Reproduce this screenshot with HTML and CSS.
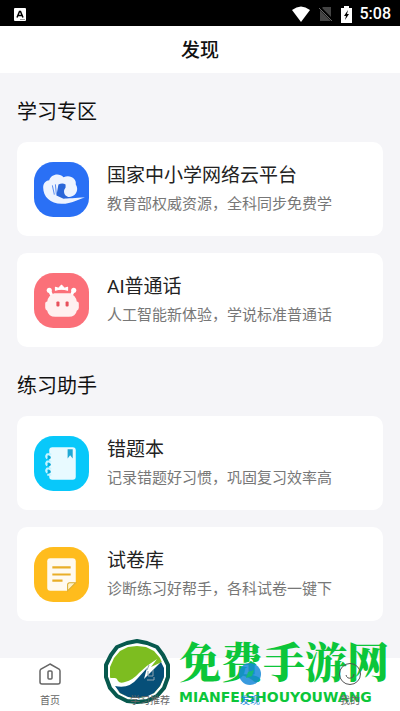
FILE: index.html
```html
<!DOCTYPE html>
<html lang="zh-CN">
<head>
  <meta charset="UTF-8">
  <meta name="viewport" content="width=device-width, initial-scale=1.0">
  <title>发现</title>
  <link rel="stylesheet" href="styles.css">
</head>

<body>
  <div class="status-bar">
    <svg class="status-app" width="12" height="13" viewBox="0 0 12 13">
      <rect width="12" height="13" rx="1" fill="#fff"/>
      <path d="M3 9.5 L5.5 3.5 H6.5 L9 9.5 M4 7.5 H8" fill="none" stroke="#000" stroke-width="1.5"/>
      <path d="M6 11.5 H11" stroke="#999"/>
    </svg>
    <div class="status-icons">
      <svg width="20" height="17" viewBox="0 0 20 17">
        <path d="M1 4 Q10 -3 19 4 L10 16 Z" fill="#fff"/>
      </svg>
      <svg width="14" height="16" viewBox="0 0 14 16">
        <path d="M4 1 H12 V15 H1 V4 Z" fill="#444"/>
        <path d="M0 1 L14 15" stroke="#000" stroke-width="3"/>
        <path d="M0 2 L13 15" stroke="#666" stroke-width="1"/>
      </svg>
      <svg width="11" height="17" viewBox="0 0 11 17">
        <path d="M3 0 H8 V2 H11 V17 H0 V2 H3 Z" fill="#fff"/>
        <path d="M7 4 L3 10 H5 L4 14 L8 8 H6 Z" fill="#000"/>
      </svg>
      <span class="time">5:08</span>
    </div>
  </div>

  <header class="header">
    <h1>发现</h1>
  </header>

  <main class="content">
    <section>
      <h2>学习专区</h2>
      <a href="#" class="card">
        <svg class="card-icon" viewBox="0 0 54 54">
          <rect width="54" height="54" rx="19" fill="#2a70f5"/>
          <path d="M9 25 C9 21 12 18 15 18 C16 12 25 10 29 15 C36 12 42 17 41 22 C44 26 42 33 36 34 L30 35 C36 37 42 34 50 35 C43 36 38 41 27 41 C16 41 9 34 9 25 Z" fill="#eef4ff"/>
          <path d="M24 22 Q28 20 31 22 L31 25 Q28 29 31 33 Q33 35 37 35 L29 36 L22 33 Z" fill="#2a66d8"/>
          <path d="M18 23 L20 32 M21 22 L22 32" stroke="#5c8ef0" stroke-width="1"/>
        </svg>
        <div class="card-text">
          <h3>国家中小学网络云平台</h3>
          <p>教育部权威资源，全科同步免费学</p>
        </div>
      </a>
      <a href="#" class="card">
        <svg class="card-icon" viewBox="0 0 54 54">
          <rect width="54" height="54" rx="19" fill="#fb7079"/>
          <path d="M21 17 V14 L24 15 L27 12 L30 15 L33 14 V17 Q27 15 21 17 Z" fill="#fff" stroke="#fff" stroke-linejoin="round"/>
          <path d="M15 17 L18 23 M39 17 L36 23" stroke="#fff" stroke-width="3"/>
          <circle cx="15" cy="17" r="2.5" fill="#fff"/>
          <circle cx="39" cy="17" r="2.5" fill="#fff"/>
          <path d="M20 20 H35 Q41 22 42 28 Q44 28 44 30 V34 Q44 36 42 37 Q41 43 34 43 H21 Q14 43 13 37 Q11 36 11 34 V30 Q11 28 13 28 Q14 22 20 20 Z" fill="#fff0f0"/>
          <rect x="22" y="28" width="3" height="5" rx="1" fill="#e8505c"/>
          <rect x="31" y="28" width="3" height="5" rx="1" fill="#e8505c"/>
        </svg>
        <div class="card-text">
          <h3>AI普通话</h3>
          <p>人工智能新体验，学说标准普通话</p>
        </div>
      </a>
    </section>

    <section>
      <h2>练习助手</h2>
      <a href="#" class="card">
        <svg class="card-icon" viewBox="0 0 54 54">
          <rect width="54" height="54" rx="19" fill="#08c8fa"/>
          <rect x="15" y="11" width="26" height="32" rx="3" fill="#e8faff"/>
          <path d="M17 18 H13 Q11 20 13 22 M17 25 H13 Q11 27 13 29 M17 32 H13 Q11 34 13 36 M17 38 H13" fill="none" stroke="#c8f4ff" stroke-width="2"/>
          <g fill="#08a8d8">
            <circle cx="15" cy="21" r="1.5"/>
            <circle cx="15" cy="28" r="1.5"/>
            <circle cx="15" cy="35" r="1.5"/>
          </g>
          <path d="M33 13 H38 V22 L35.5 19 L33 22 Z" fill="#20a8d4"/>
        </svg>
        <div class="card-text">
          <h3>错题本</h3>
          <p>记录错题好习惯，巩固复习效率高</p>
        </div>
      </a>
      <a href="#" class="card">
        <svg class="card-icon" viewBox="0 0 54 54">
          <rect width="54" height="54" rx="19" fill="#ffbc1d"/>
          <path d="M16 11 H38 Q41 11 41 14 V35 L33 43 H16 Q13 43 13 40 V14 Q13 11 16 11 Z" fill="#fffaf0"/>
          <path d="M18 20 H36 M18 27 H36 M18 33 H28" stroke="#e9ae28" stroke-width="2"/>
          <path d="M33 43 V37 Q33 35 35 35 H41 Z" fill="#fff3c8" stroke="#d9ac30" stroke-width="1"/>
        </svg>
        <div class="card-text">
          <h3>试卷库</h3>
          <p>诊断练习好帮手，各科试卷一键下</p>
        </div>
      </a>
    </section>
  </main>

  <footer class="footer">
    <div class="watermark">
      <svg class="watermark-logo" width="68" height="66" viewBox="0 0 68 66">
        <path d="M34 2 L44 4 L54 8 L60 16 L65 26 L65 38 L61 49 L54 57 L44 62 L34 63 L24 62 L14 57 L7 49 L3 38 L3 26 L8 16 L14 8 L24 4 Z" fill="#fff" stroke="#07594e" stroke-width="4" stroke-linejoin="round"/>
        <path d="M34 7 L43 8 L51 12 L57 19 L61 28 L61 38 L57 47 L51 54 L43 58 L34 59 L25 58 L17 54 L11 47 L7 38 L7 28 L11 19 L17 12 L25 8 Z" fill="#7dbd20"/>
        <path d="M7 39 L12 39 Q14 39 15 42 Q17 45 22 43 Q30 41 36 34 Q44 26 54 20 L48 28 L61 22 L61 38 L48 57 L24 58 L11 49 Z" fill="#fff"/>
        <path d="M12 47 Q26 50 34 40 L44 29 L41 40 L58 23 L61 29 L61 38 L57 47 L51 54 L43 58 L34 59 L25 58 L17 54 Z" fill="#064f78"/>
      </svg>
      <div class="watermark-text">
        <strong>免费手游网</strong>
        <span>MIANFEISHOUYOUWANG</span>
      </div>
    </div>
    <nav class="tab-bar">
      <a href="#" class="tab">
        <svg width="24" height="24" viewBox="0 0 24 24" fill="none" stroke="#666" stroke-width="1.5">
          <path d="M12 2 L21 7 Q22 8 22 9 V20 Q22 22 20 22 H4 Q2 22 2 20 V9 Q2 8 3 7 Z"/>
          <rect x="10" y="9" width="4" height="8" rx="1"/>
        </svg>
        <span>首页</span>
      </a>
      <a href="#" class="tab">
        <svg width="24" height="24" viewBox="0 0 24 24" fill="none" stroke="#8fa3ae" stroke-width="1">
          <path d="M9 8 L11 3 M10 9 V14 H15 V8 M9 18 H16 V15"/>
        </svg>
        <span>学习推荐</span>
      </a>
      <a href="#" class="tab active">
        <svg width="24" height="24" viewBox="0 0 24 24">
          <circle cx="12" cy="12" r="11" fill="#1688d8" opacity="0.85"/>
          <path d="M8 16 L10 10 L16 8 L14 14 Z" fill="#16b878"/>
        </svg>
        <span>发现</span>
      </a>
      <a href="#" class="tab">
        <svg width="24" height="24" viewBox="0 0 24 24" fill="none" stroke="#555" stroke-width="1">
          <circle cx="12" cy="12" r="10.5"/>
          <path d="M8 13 Q9 17 13 16 Q16 15 16 12"/>
        </svg>
        <span>我的</span>
      </a>
    </nav>
  </footer>
</body>
</html>
```
FILE: styles.css
```css
* {
  box-sizing: border-box;
}

body {
  display: flex;
  flex-direction: column;
  min-height: 100vh;
  margin: 0;
  background-color: #f5f5f8;
  color: #111;
  font-family: Roboto, "Noto Sans CJK SC", sans-serif;
}

h1,
h2,
h3,
p {
  margin: 0;
  font-weight: 400;
}

a {
  color: inherit;
  text-decoration: none;
}

.status-bar {
  display: flex;
  justify-content: space-between;
  align-items: center;
  height: 26px;
  padding: 2px 9px 0 14px;
  background-color: #000;
  color: #fff;
}

.status-icons {
  display: flex;
  align-items: center;
  gap: 8px;
}

.time {
  font-size: 16px;
  font-weight: 500;
  line-height: 24px;
}

.header {
  padding: 9px 0 7px;
  background-color: #fff;
  text-align: center;
}

.header h1 {
  font-size: 19px;
  font-weight: 500;
  line-height: 31px;
}

.content {
  flex: 1;
  padding: 0 17px 17px;
}

.content h2 {
  padding: 25px 0 15px;
  font-size: 20px;
  line-height: 29px;
}

.card {
  display: flex;
  align-items: center;
  gap: 18px;
  height: 94px;
  margin-bottom: 17px;
  padding: 0 17px;
  border-radius: 10px;
  background-color: #fff;
}

.card:last-child {
  margin-bottom: 0;
}

.card-icon {
  flex: none;
  width: 55px;
  height: 55px;
}

.card h3 {
  color: #222;
  font-size: 19px;
  line-height: 31px;
}

.card p {
  color: #777;
  font-size: 15px;
  line-height: 27px;
}

.footer {
  position: relative;
  background-color: #fff;
}

.tab-bar {
  position: relative;
  display: flex;
  padding: 4px 0 2px;
}

.tab {
  display: flex;
  flex: 1;
  flex-direction: column;
  align-items: center;
  gap: 7px;
  color: #666;
  font-size: 10px;
  line-height: 16px;
}

.tab.active {
  color: #1688d8;
}

/* site mark lying over the tab bar */
.watermark {
  position: absolute;
  right: 11px;
  bottom: 6px;
  display: flex;
  align-items: flex-end;
  gap: 8px;
}

.watermark-logo {
  flex: none;
}

.watermark-text {
  display: flex;
  flex-direction: column;
  gap: 5px;
  color: #0cc63a;
  white-space: nowrap;
}

.watermark-text strong {
  font-family: "Noto Serif CJK SC", "Noto Sans CJK SC", serif;
  font-size: 42px;
  font-weight: 900;
  line-height: 48px;
}

.watermark-text span {
  font-family: "DejaVu Sans", sans-serif;
  font-size: 14px;
  font-weight: 700;
  line-height: 16px;
}
```
